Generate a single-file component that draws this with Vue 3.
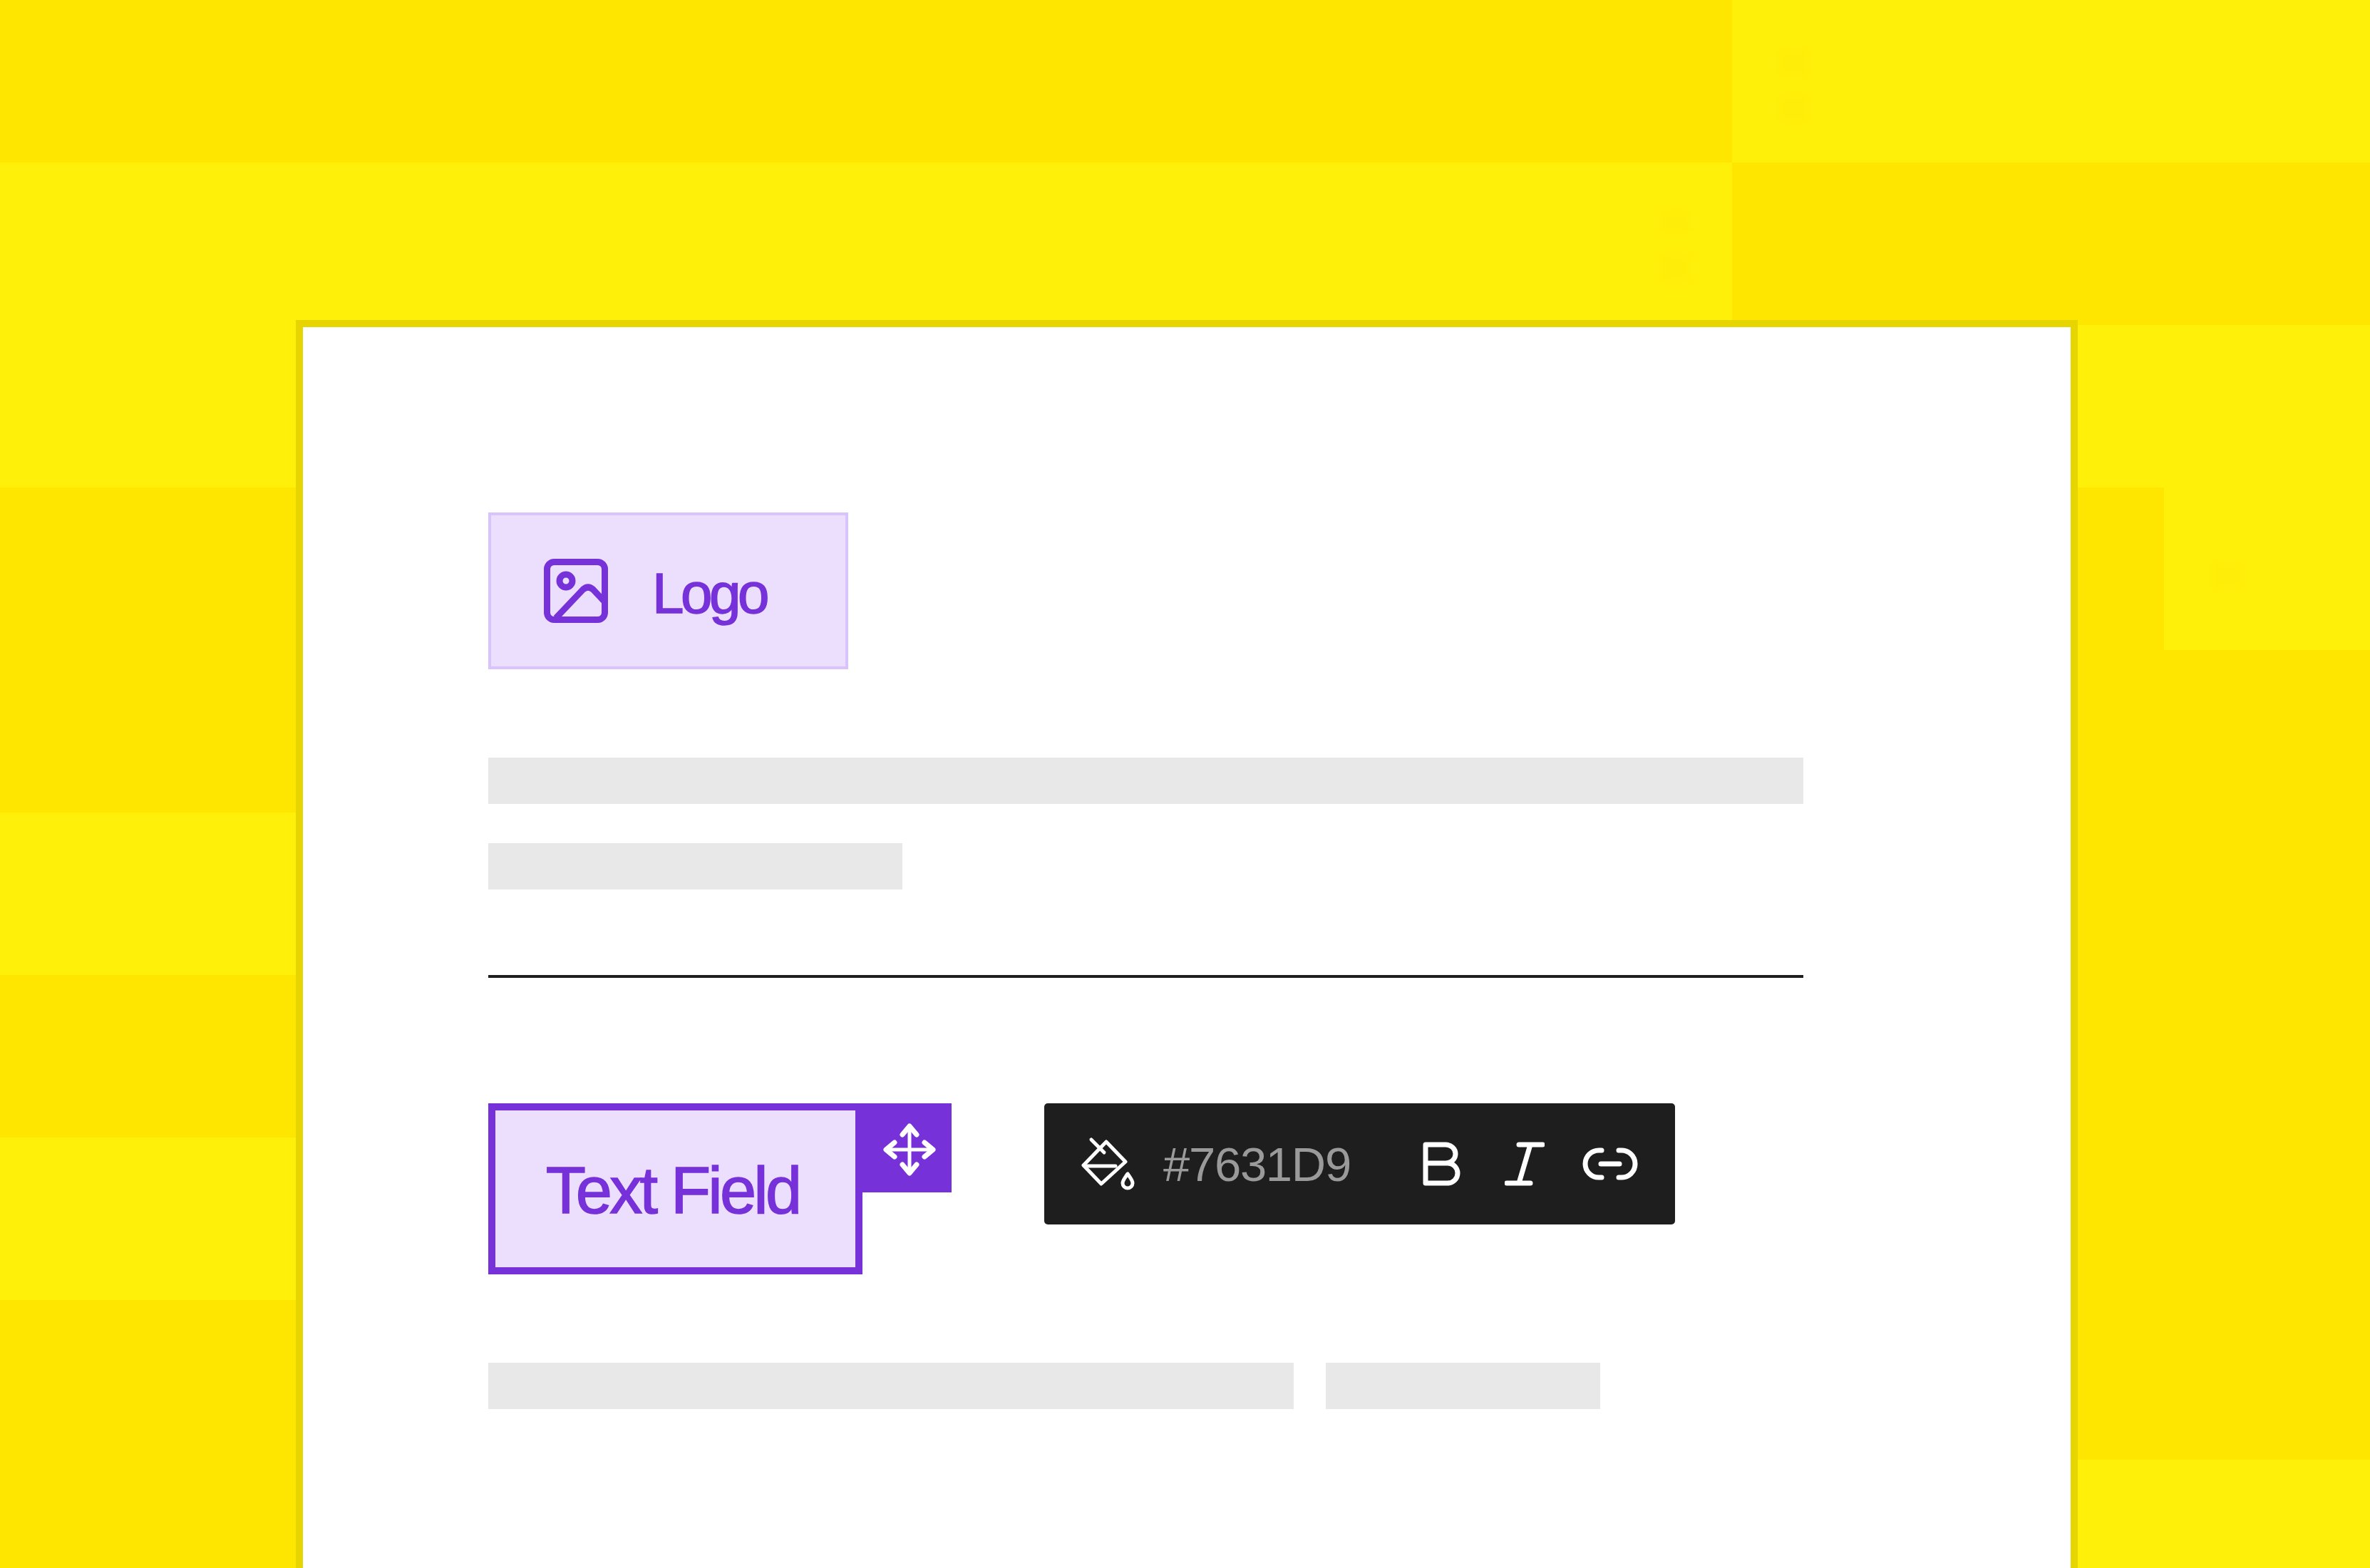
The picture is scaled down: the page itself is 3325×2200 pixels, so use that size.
<script setup>
// light squares over the dark yellow base
const tiles = [
  { x: 2430, y: 0, w: 895, h: 228 },
  { x: 0, y: 228, w: 2430, h: 456 },
  { x: 2430, y: 456, w: 895, h: 228 },
  { x: 0, y: 1140, w: 425, h: 228 },
  { x: 0, y: 1596, w: 425, h: 228 },
  { x: 3036, y: 684, w: 289, h: 228 },
  { x: 2430, y: 2048, w: 895, h: 152 },
]

// faint smudges left in the background squares
const marks = [
  { x: 2493, y: 70, w: 44, h: 36 },
  { x: 2493, y: 132, w: 44, h: 40 },
  { x: 2329, y: 296, w: 44, h: 30 },
  { x: 2329, y: 356, w: 44, h: 40 },
  { x: 3103, y: 790, w: 46, h: 36 },
]

const bars = [
  { w: 1845, gap: 0 },
  { w: 581, gap: 55 },
]

const box = (r) => ({ left: r.x + 'px', top: r.y + 'px', width: r.w + 'px', height: r.h + 'px' })
</script>

<template>
  <div class="page">
    <div class="tiles">
      <div v-for="(t, i) in tiles" :key="i" class="tile" :style="box(t)"></div>
      <div v-for="(m, i) in marks" :key="'m' + i" class="mark" :style="box(m)"></div>
    </div>

    <div class="card">
      <div class="logo">
        <svg class="logo-icon" viewBox="0 0 90 90" fill="none" stroke="#7631D9" stroke-width="9">
          <rect x="4.5" y="4.5" width="81" height="81" rx="10" />
          <circle cx="31" cy="31" r="9" />
          <path d="M17 83 L55 43 Q62 37 69 43 L85 60" stroke-linejoin="round" />
        </svg>
        <span class="logo-text">Logo</span>
      </div>

      <div
        v-for="b in bars"
        :key="b.w"
        class="bar"
        :class="{ second: b.gap }"
        :style="{ width: b.w + 'px' }"
      ></div>

      <div class="rule"></div>

      <div class="tools">
        <div class="field">
          <span class="field-text">Text Field</span>
          <div class="handle">
            <svg viewBox="0 0 76 76" width="76" height="76" fill="none" stroke="#fff" stroke-linecap="round" stroke-linejoin="round">
              <path d="M38 6V70M6 38H70" stroke-width="5" />
              <path d="M28 17 38 5 48 17M28 59 38 71 48 59M17 28 5 38 17 48M59 28 71 38 59 48" stroke-width="7" />
            </svg>
          </div>
        </div>

        <div class="toolbar">
          <svg class="bucket" viewBox="24 24 80 80" width="80" height="80" fill="none" stroke="#fff" stroke-width="5" stroke-linecap="round" stroke-linejoin="round">
            <path d="M62 33 89 61 55 92 30 66Z" />
            <path d="M41 30 59 48" />
            <path d="M32 67H75" />
            <path d="M92 78C88 84 85 87 85 91A7 7 0 0 0 99 91C99 87 96 84 92 78Z" />
          </svg>
          <span class="hex">#7631D9</span>
          <svg class="fmt fmt-b" viewBox="0 0 56 62" width="56" height="62" fill="none" stroke="#fff" stroke-width="7" stroke-linecap="round" stroke-linejoin="round">
            <path d="M5 4H33A14 13 0 0 1 33 30H5ZM5 30H36A14 14 0 0 1 36 58H5Z" />
          </svg>
          <svg class="fmt fmt-i" viewBox="0 0 56 62" width="56" height="62" fill="none" stroke="#fff" stroke-width="7" stroke-linecap="round" stroke-linejoin="round">
            <path d="M20 4H53M3 58H36M36 4 20 58" />
          </svg>
          <svg class="fmt fmt-l" viewBox="0 0 80 48" width="80" height="48" fill="none" stroke="#fff" stroke-width="7" stroke-linecap="round" stroke-linejoin="round">
            <path d="M28 5H24A19 19 0 0 0 24 43H28M52 5H56A19 19 0 0 1 56 43H52M27 24H53" />
          </svg>
        </div>
      </div>

      <div class="foot">
        <div class="bar foot-a"></div>
        <div class="bar foot-b"></div>
      </div>
    </div>
  </div>
</template>

<style scoped>
.page {
  position: relative;
  width: 3325px;
  height: 2200px;
  overflow: hidden;
  background: #ffe600;
  font-family: "Liberation Sans", Arial, sans-serif;
}
.tiles {
  position: absolute;
  inset: 0;
}
.tile {
  position: absolute;
  background: #fff00a;
}
.mark {
  position: absolute;
  background: #feed08;
  filter: blur(5px);
}
.card {
  position: relative;
  box-sizing: border-box;
  width: 2500px;
  height: 1900px;
  margin-left: 415px;
  top: 449px;
  padding: 260px 0 0 260px;
  background: #fff;
  border: 10px solid #e6d500;
}
.logo {
  box-sizing: border-box;
  display: flex;
  align-items: center;
  width: 505px;
  height: 220px;
  padding-left: 74px;
  background: #ecdffd;
  border: 4px solid #d9c3fd;
}
.logo-icon {
  width: 90px;
  height: 90px;
  margin-right: 62px;
}
.logo-text {
  position: relative;
  top: 4px;
  font-size: 80px;
  letter-spacing: -4.5px;
  color: #7631d9;
  -webkit-text-stroke: 1.5px #7631d9;
}
.bar {
  height: 65px;
  background: #e8e8e8;
}
.logo + .bar {
  margin-top: 124px;
}
.second {
  margin-top: 55px;
}
.rule {
  width: 1845px;
  height: 4px;
  margin-top: 120px;
  background: #1e1e1e;
}
.tools {
  display: flex;
  align-items: flex-start;
  margin-top: 176px;
}
.field {
  position: relative;
  box-sizing: border-box;
  display: flex;
  align-items: center;
  justify-content: center;
  width: 525px;
  height: 240px;
  padding: 0 8px 0 0;
  background: #ecdffd;
  border: 10px solid #7631d9;
}
.field-text {
  position: relative;
  top: 2px;
  font-size: 92px;
  letter-spacing: -3.8px;
  color: #7631d9;
  -webkit-text-stroke: 1.5px #7631d9;
}
.handle {
  position: absolute;
  top: -10px;
  right: -135px;
  box-sizing: border-box;
  display: flex;
  align-items: center;
  justify-content: center;
  width: 135px;
  height: 125px;
  padding: 4px 0 0 16px;
  background: #7631d9;
}
.toolbar {
  box-sizing: border-box;
  display: flex;
  align-items: center;
  width: 885px;
  height: 170px;
  margin-left: 255px;
  padding-left: 49px;
  background: #1e1e1e;
  border-radius: 5px;
}
.hex {
  margin-left: 38px;
  font-size: 67px;
  letter-spacing: -1.3px;
  color: #9a9a9a;
}
.fmt-b {
  margin-left: 100px;
}
.fmt-i {
  margin-left: 60px;
}
.fmt-l {
  margin-left: 52px;
}
.foot {
  display: flex;
  gap: 45px;
  margin-top: 124px;
}
.foot-a {
  width: 1130px;
}
.foot-b {
  width: 385px;
}
</style>

<style>
body {
  margin: 0;
}
</style>
